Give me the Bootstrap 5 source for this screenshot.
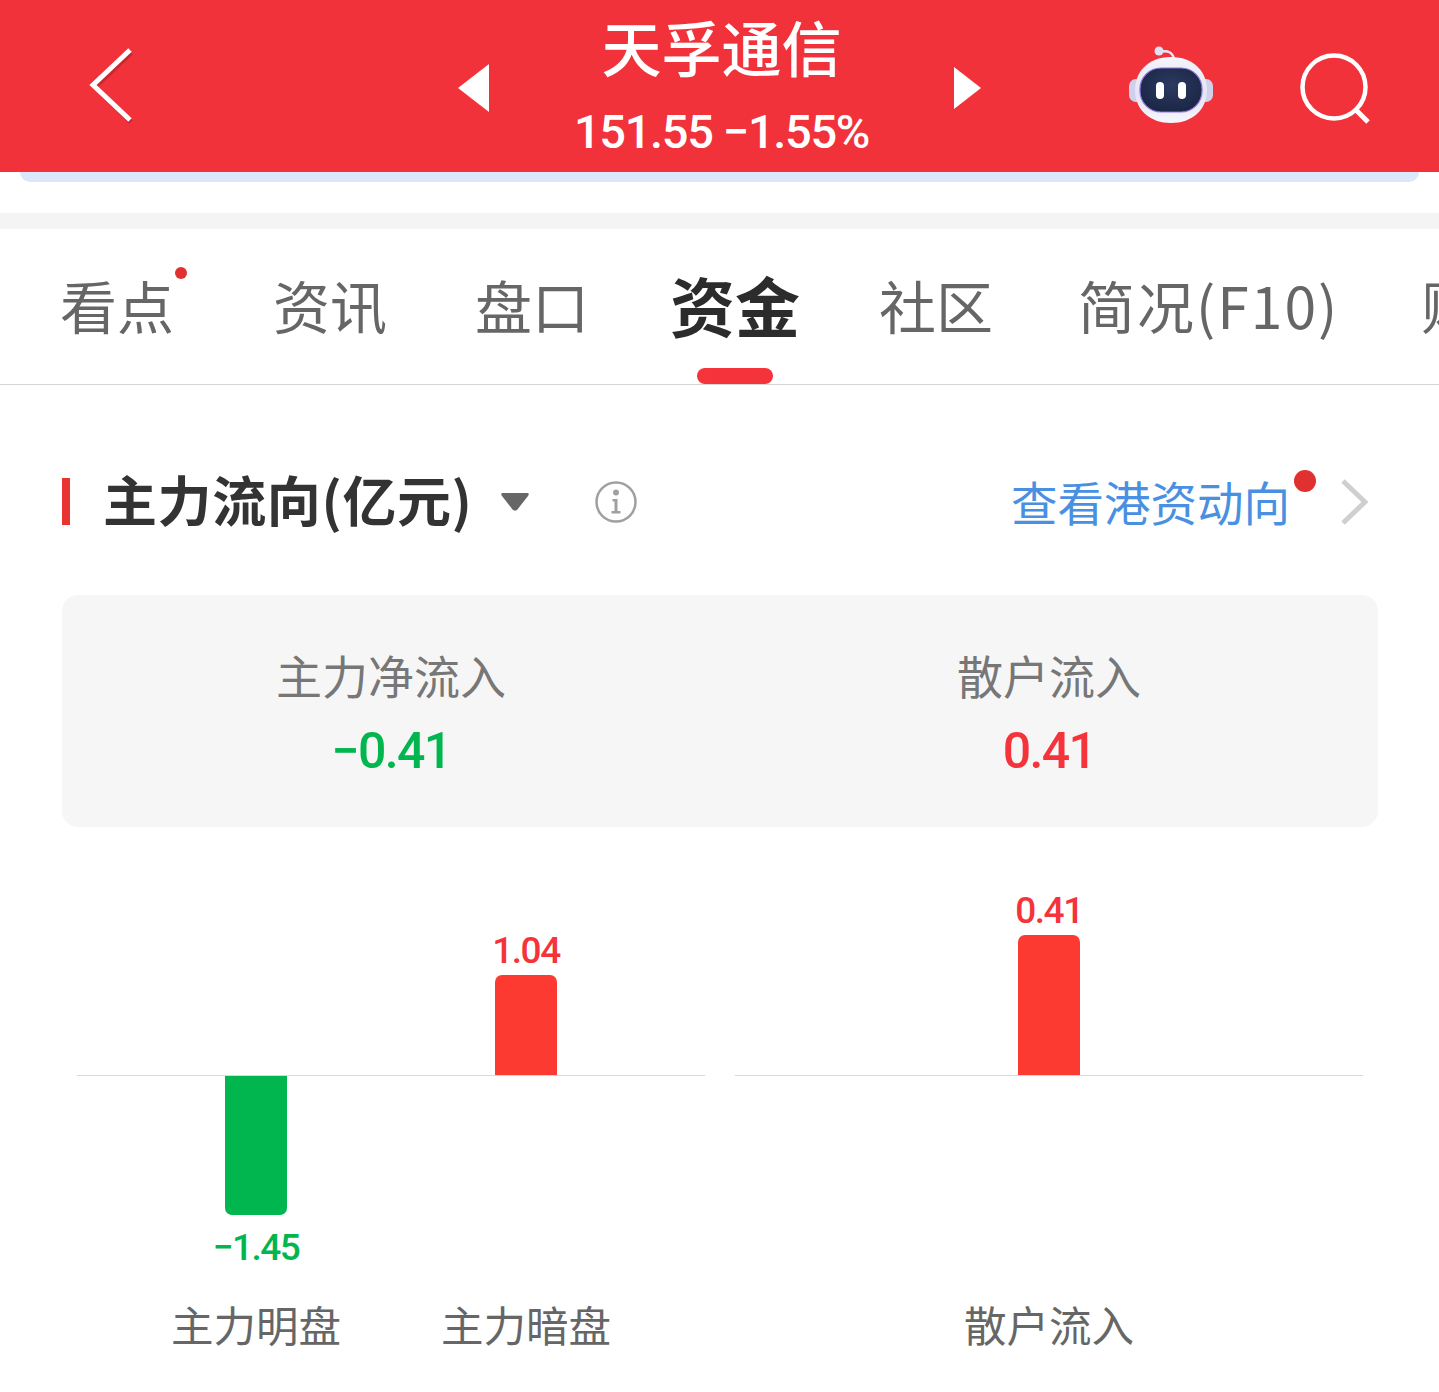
<!DOCTYPE html>
<html lang="zh">
<head>
  <meta charset="utf-8">
  <title>天孚通信 - 资金</title>
  <link href="https://cdn.jsdelivr.net/npm/bootstrap@5.3.2/dist/css/bootstrap.min.css" rel="stylesheet">
  <style>
    body {
      background: #fff;
      font-family: "Noto Sans CJK SC", "Noto Sans", sans-serif;
      overflow: hidden;
    }
    .num { font-family: Roboto, "Liberation Sans", sans-serif; font-weight: 500; }

    .top-bar { height: 172px; background: #f2323a; color: #fff; padding: 0 67px 0 88px; }
    .back-btn { width: 200px; }
    .back-icon { margin-top: 47px; }
    .stock-switch { width: 523px; margin-left: 170px; }
    .nav-prev { margin-top: 64px; }
    .nav-next { margin-top: 67px; }
    .stock-title { font-size: 60px; font-weight: 500; line-height: 60px; margin-top: 16px; }
    .stock-price { font-size: 47px; line-height: 50px; margin-top: 31px; letter-spacing: -1.35px; white-space: nowrap; }
    .top-tools { gap: 87px; margin-left: auto; }
    .robot-icon { margin-top: 46px; }
    .search-icon { margin-top: 52px; }

    .top-strip { height: 10px; margin: 0 20px; background: #dbe8f9; border-radius: 0 0 18px 18px; }
    .gap-band { height: 16px; margin-top: 31px; background: #f4f4f4; }

    .tab-row { height: 156px; border-bottom: 1px solid #d5d5d5; overflow: hidden; padding-left: 60px; white-space: nowrap; }
    .tab-item { position: relative; flex: none; font-size: 57px; line-height: 150px; color: #666; }
    .tab-item:nth-child(2) { margin-left: 99px; }
    .tab-item:nth-child(3) { margin-left: 88px; }
    .tab-item:nth-child(4) { margin-left: 81px; }
    .tab-item:nth-child(5) { margin-left: 79px; }
    .tab-item:nth-child(6) { margin-left: 85px; letter-spacing: 2px; }
    .tab-item:nth-child(7) { margin-left: 82px; }
    .tab-item.on { font-size: 65px; font-weight: 700; color: #2c2c2c; }
    .tab-dot { position: absolute; top: 38px; right: -13px; width: 12px; height: 12px; border-radius: 50%; background: #e0302f; }
    .tab-mark { position: absolute; left: 27px; bottom: 0; width: 76px; height: 16px; border-radius: 8px; background: #f5333b; }

    .sec-head { height: 56px; margin-top: 89px; padding: 0 71px 0 62px; }
    .sec-mark { width: 8px; height: 47px; margin-top: -2px; background: #e93232; }
    .sec-title { font-size: 54px; line-height: 56px; font-weight: 700; color: #333; margin: -6px 0 0 33px; letter-spacing: .6px; white-space: nowrap; }
    .sec-caret { margin-left: 28px; }
    .sec-info { margin-left: 66px; }
    .sec-link { position: relative; margin: -2px 0 0 auto; font-size: 46.5px; line-height: 56px; color: #4a90e2; }
    .link-dot { position: absolute; top: -3px; right: -26px; width: 22px; height: 22px; border-radius: 50%; background: #e0302f; }
    .sec-arrow { margin-left: 50px; }

    .sum-box { height: 232px; margin: 65px 61px 0 62px; background: #f6f6f6; border-radius: 16px; }
    .sum-cell { width: 658px; height: 100%; text-align: center; }
    .sum-label { font-size: 46px; line-height: 50px; color: #777; margin-top: 54px; }
    .sum-val { font-size: 50px; line-height: 56px; margin-top: 24px; letter-spacing: -1.6px; }
    .c-up { color: #f5333b; }
    .c-down { color: #02b64f; }

    .chart-row { margin-top: 52px; padding-left: 77px; gap: 30px; }
    .chart-panel { width: 628px; }
    .chart-plot { height: 197px; border-bottom: 1px solid #d9d9d9; }
    .chart-under { height: 223px; }
    .bar-col { width: 100px; text-align: center; }
    .bar-fill { width: 62px; margin: 0 auto; }
    .bar-up { background: #fd3a31; border-radius: 7px 7px 0 0; }
    .bar-down { background: #02b64f; border-radius: 0 0 7px 7px; }
    .bar-val { font-size: 37px; line-height: 40px; letter-spacing: -1.5px; white-space: nowrap; }
    .val-above { margin-bottom: 4px; }
    .val-below { margin-top: 13px; }
    .chart-name { width: 270px; text-align: center; font-size: 42.5px; line-height: 50px; color: #666; white-space: nowrap; }
    .slot { width: 270px; }
  </style>
</head>
<body>

<header class="top-bar d-flex align-items-start">
  <div class="back-btn">
    <svg class="back-icon d-block" width="48" height="78" viewBox="0 0 48 78">
      <path d="M42 4 6 38l36 35" transform="translate(1 2)" fill="none" stroke="#a82028" stroke-opacity=".55" stroke-width="5"/>
      <path d="M42 3 5 38l37 35" fill="none" stroke="#fff" stroke-width="5"/>
    </svg>
  </div>
  <div class="stock-switch d-flex justify-content-between">
    <svg class="nav-prev" width="31" height="48" viewBox="0 0 31 48"><path d="M31 0v48L0 24z" fill="#fff"/></svg>
    <div class="text-center">
      <div class="stock-title">天孚通信</div>
      <div class="stock-price num">151.55 −1.55%</div>
    </div>
    <svg class="nav-next" width="27" height="42" viewBox="0 0 27 42"><path d="M0 0v42l27-21z" fill="#fff"/></svg>
  </div>
  <div class="top-tools d-flex">
    <svg class="robot-icon" width="84" height="78" viewBox="0 0 84 78">
      <defs>
        <linearGradient id="robotHead" x1="0" y1="0" x2="0" y2="1">
          <stop offset="0" stop-color="#f4f4fb"/>
          <stop offset=".55" stop-color="#e4e4f4"/>
          <stop offset="1" stop-color="#f6f6fd"/>
        </linearGradient>
        <radialGradient id="robotFace" cx=".5" cy=".4" r=".6">
          <stop offset="0" stop-color="#2b3a60"/>
          <stop offset="1" stop-color="#1c2747"/>
        </radialGradient>
      </defs>
      <path d="M31 6q12-3 14 7" fill="none" stroke="#e6e6f4" stroke-width="2.5"/>
      <circle cx="30" cy="5" r="4.5" fill="#dfe0f2"/>
      <rect x="0" y="33" width="84" height="23" rx="7" fill="#cfd0ea"/>
      <path d="M42 11c24 0 36 16 36 33 0 20-15 33-36 33S6 64 6 44c0-17 12-33 36-33z" fill="url(#robotHead)"/>
      <rect x="11" y="22" width="62" height="44" rx="21" fill="url(#robotFace)" stroke="#8f73dd" stroke-width="1.2"/>
      <rect x="27" y="36" width="8" height="17" rx="4" fill="#fff"/>
      <rect x="49" y="36" width="8" height="17" rx="4" fill="#fff"/>
    </svg>
    <svg class="search-icon" width="72" height="72" viewBox="0 0 72 72">
      <circle cx="34" cy="35" r="31.5" fill="none" stroke="#fff" stroke-width="4.5"/>
      <path d="M55 57l13 13" fill="none" stroke="#fff" stroke-width="5"/>
    </svg>
  </div>
</header>
<div class="top-strip"></div>
<div class="gap-band"></div>

<nav class="tab-row d-flex">
  <div class="tab-item">看点<span class="tab-dot"></span></div>
  <div class="tab-item">资讯</div>
  <div class="tab-item">盘口</div>
  <div class="tab-item on">资金<span class="tab-mark"></span></div>
  <div class="tab-item">社区</div>
  <div class="tab-item">简况(F10)</div>
  <div class="tab-item">财务</div>
</nav>

<section class="sec-head d-flex align-items-center">
  <span class="sec-mark"></span>
  <span class="sec-title">主力流向(亿元)</span>
  <svg class="sec-caret" width="28" height="18" viewBox="0 0 28 18"><path d="M2 0h24q3 0 1 3L16 17q-2 1-4 0L1 3Q-1 0 2 0z" fill="#666"/></svg>
  <svg class="sec-info" width="42" height="42" viewBox="0 0 42 42">
    <circle cx="21" cy="21" r="19.5" fill="none" stroke="#a0a0a0" stroke-width="2.5"/>
    <circle cx="21" cy="11.5" r="3" fill="#a0a0a0"/>
    <path d="M17.5 18H22.5V30H25.5V32.5H16.5V30H19.5V20.5H17.5z" fill="#a0a0a0"/>
  </svg>
  <a class="sec-link text-decoration-none">查看港资动向<span class="link-dot"></span></a>
  <svg class="sec-arrow" width="28" height="48" viewBox="0 0 28 48"><path d="M3 3l22 21L3 45" fill="none" stroke="#cfcfcf" stroke-width="5"/></svg>
</section>

<section class="sum-box d-flex">
  <div class="sum-cell">
    <div class="sum-label">主力净流入</div>
    <div class="sum-val num c-down">−0.41</div>
  </div>
  <div class="sum-cell">
    <div class="sum-label">散户流入</div>
    <div class="sum-val num c-up">0.41</div>
  </div>
</section>

<section class="chart-row d-flex">
  <div class="chart-panel">
    <div class="chart-plot d-flex align-items-end justify-content-center">
      <div class="slot"></div>
      <div class="slot">
        <div class="bar-col mx-auto">
          <div class="bar-val val-above num c-up">1.04</div>
          <div class="bar-fill bar-up" style="height:100px"></div>
        </div>
      </div>
    </div>
    <div class="chart-under d-flex justify-content-center">
      <div class="slot">
        <div class="bar-col mx-auto">
          <div class="bar-fill bar-down" style="height:139px"></div>
          <div class="bar-val val-below num c-down">−1.45</div>
        </div>
      </div>
      <div class="slot"></div>
    </div>
    <div class="d-flex justify-content-center">
      <div class="chart-name">主力明盘</div>
      <div class="chart-name">主力暗盘</div>
    </div>
  </div>
  <div class="chart-panel">
    <div class="chart-plot d-flex align-items-end justify-content-center">
      <div class="bar-col">
        <div class="bar-val val-above num c-up">0.41</div>
        <div class="bar-fill bar-up" style="height:140px"></div>
      </div>
    </div>
    <div class="chart-under"></div>
    <div class="d-flex justify-content-center">
      <div class="chart-name">散户流入</div>
    </div>
  </div>
</section>

<script src="https://cdn.jsdelivr.net/npm/bootstrap@5.3.2/dist/js/bootstrap.bundle.min.js"></script>
</body>
</html>
